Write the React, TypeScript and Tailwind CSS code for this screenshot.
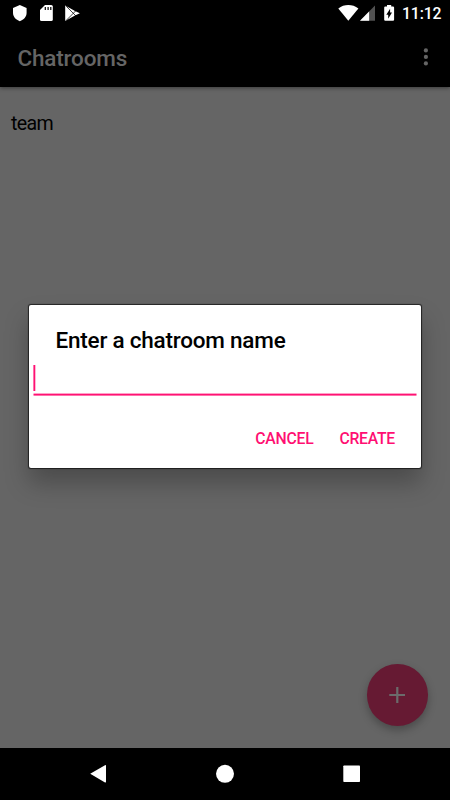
import React from "react";

function StatusBar() {
  return (
    <div className="flex h-[27px] shrink-0 items-start bg-black text-white">
      <svg className="h-[27px] w-[100px]" viewBox="0 0 100 27" fill="currentColor">
        <path d="M19.8 5 26.6 8V12.8C26.6 16.5 23.8 20 19.8 21.2 15.8 20 13 16.5 13 12.8V8Z" />
        <path d="M45 5H51.3Q52.8 5 52.8 6.5V19.6Q52.8 21.1 51.3 21.1H41.5Q40 21.1 40 19.6V10Z" />
        <path d="M45.3 7.1V10M48.1 7.1V10M50.8 7.1V10" stroke="black" strokeWidth="1.2" />
        <path d="M65.2 5.6 75 11 79.9 13.2 75 15.6 65.2 21Z" />
        <path d="M66.2 6.2 76.2 16.2M66.2 20.4 76.2 10.4" stroke="black" strokeWidth=".75" />
      </svg>
      <svg className="ml-auto h-[27px] w-[70px]" viewBox="330 0 70 27" fill="currentColor">
        <path d="M348.3 20.7 338.3 8.4C344.2 3.9 352.4 3.9 358.4 8.4Z" />
        <path d="M360 20.8 375 5.4V20.8Z" fillOpacity=".32" />
        <path d="M360 20.8 369.1 11.4V20.8Z" />
        <path d="M387 5H391.2V6.5H393Q394.1 6.5 394.1 7.6V19.7Q394.1 20.8 393 20.8H385.3Q384.2 20.8 384.2 19.7V7.6Q384.2 6.5 385.3 6.5H387Z" />
        <path d="M390.1 8.8V12.5H392L388.2 18.8V14.7H386.3Z" fill="black" />
      </svg>
      <span className="w-[50px] pl-[2px] text-[15.75px] leading-[28px] font-medium tracking-[-0.1px] whitespace-nowrap">11:12</span>
    </div>
  );
}

function AppBar() {
  return (
    <header className="relative flex h-[60px] shrink-0 items-center justify-between bg-black pr-[22px] pl-[17.5px] text-[#656565] shadow-[0_1px_4px_rgba(0,0,0,0.45)]">
      <h1 className="pt-px text-[22.5px] leading-[60px] font-medium tracking-[-0.18px]">Chatrooms</h1>
      <svg className="h-[20px] w-[5px]" viewBox="0 0 5 20" fill="currentColor">
        <circle cx="2.9" cy="3.4" r="2.1" />
        <circle cx="2.9" cy="9.9" r="2.1" />
        <circle cx="2.9" cy="16.4" r="2.1" />
      </svg>
    </header>
  );
}

function NavigationBar() {
  return (
    <nav className="relative flex h-[52px] shrink-0 bg-black">
      <svg className="h-[52px] w-full" viewBox="0 748 450 52" fill="white">
        <path d="M90.2 773.7 105 765.2Q106 764.6 106 765.8V781.8Q106 783 105 782.4Z" />
        <circle cx="225" cy="773.8" r="9" />
        <rect x="343.3" y="765.5" width="16.7" height="16.5" rx=".8" />
      </svg>
    </nav>
  );
}

function ChatroomDialog() {
  return (
    <section role="dialog" className="absolute top-[305px] left-[29px] flex h-[163px] w-[392px] flex-col rounded-[2px] bg-white shadow-[0_0_1px_1px_rgba(0,0,0,0.65),0_15px_24px_rgba(0,0,0,0.26)]">
      <h2 className="mt-[20px] pl-[26.5px] text-[22.5px] leading-[30px] font-medium tracking-[-0.22px] text-black">Enter a chatroom name</h2>
      <svg className="mt-[9px] h-[33px] w-full" viewBox="0 0 392 33" fill="#ff1273">
        <rect x="4.4" y="1" width="1.9" height="26" />
        <rect x="4.5" y="29.6" width="383" height="2" />
      </svg>
      <div className="mt-[30.5px] flex justify-end gap-[26px] pr-[26px] text-[15.75px] leading-[22px] font-medium tracking-[-0.25px] text-[#ff0f72]">
        <button>CANCEL</button>
        <button>CREATE</button>
      </div>
    </section>
  );
}

export default function App() {
  return (
    <div className="relative flex h-[800px] w-[450px] flex-col overflow-hidden bg-[#656565] font-[Roboto,sans-serif]">
      <StatusBar />
      <AppBar />
      <main className="flex-1 pt-[22px] pl-[11px]">
        <p className="text-[19.6px] leading-[30px] tracking-[-0.65px] text-black">team</p>
      </main>
      <button className="absolute top-[664px] left-[366.5px] flex size-[61.5px] items-center justify-center rounded-full bg-[#661a33] shadow-[0_4px_9px_rgba(0,0,0,0.28)]">
        <svg className="size-[16px]" viewBox="0 0 16 16" fill="none" stroke="#6b6b6b" strokeWidth="2.2">
          <path d="M8.3 0V16M.3 8H16" />
        </svg>
      </button>
      <NavigationBar />
      <ChatroomDialog />
    </div>
  );
}
